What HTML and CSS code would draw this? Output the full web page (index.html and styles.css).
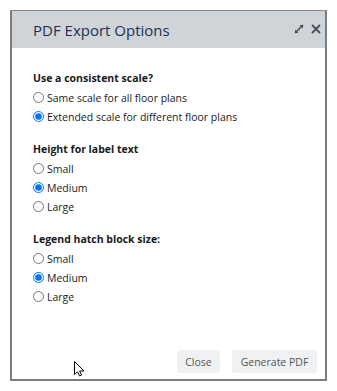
FILE: index.html
```html
<!DOCTYPE html>
<html lang="en">
<head>
<meta charset="UTF-8">
<meta name="viewport" content="width=device-width, initial-scale=1.0">
<title>PDF Export Options</title>
<link rel="stylesheet" href="styles.css">
</head>
<body>
    <div class="dialog">
        <div class="dialog-header">
            <h1>PDF Export Options</h1>
            <div class="header-icons">
                <svg class="icon-expand" width="10" height="10" viewBox="0 0 10 10">
                    <path d="M1 9 L9 1" stroke="#4a4f55" stroke-width="1.6"/>
                    <path d="M5.5 1 L9 1 L9 4.5 Z" fill="#4a4f55"/>
                    <path d="M1 5.5 L1 9 L4.5 9 Z" fill="#4a4f55"/>
                </svg>
                <svg class="icon-close" width="10" height="10" viewBox="0 0 10 10">
                    <path d="M1 1 L9 9 M9 1 L1 9" stroke="#4a4f55" stroke-width="1.8"/>
                </svg>
            </div>
        </div>
        <div class="dialog-body">
            <div class="option-group">
                <h2>Use a consistent scale?</h2>
                <label><input type="radio" name="scale"> Same scale for all floor plans</label>
                <label><input type="radio" name="scale" checked> Extended scale for different floor plans</label>
            </div>
            <div class="option-group">
                <h2>Height for label text</h2>
                <label><input type="radio" name="label"> Small</label>
                <label><input type="radio" name="label" checked> Medium</label>
                <label><input type="radio" name="label"> Large</label>
            </div>
            <div class="option-group">
                <h2>Legend hatch block size:</h2>
                <label><input type="radio" name="hatch"> Small</label>
                <label><input type="radio" name="hatch" checked> Medium</label>
                <label><input type="radio" name="hatch"> Large</label>
            </div>
        </div>
        <div class="dialog-footer">
            <button class="btn-close">Close</button>
            <button class="btn-generate">Generate PDF</button>
        </div>
    </div>
    <svg class="cursor" width="13" height="16" viewBox="0 0 13 16">
        <path d="M0.5 0.5 L0.5 13.5 L3.5 10.8 L5.6 15 L7.6 14.1 L5.6 10 L10 10 Z" fill="#fff" stroke="#000" stroke-width="1"/>
    </svg>
</body>
</html>
```

FILE: styles.css
```css
body {
    margin: 0;
    padding: 0;
    background: #fff;
    font-family: "Open Sans", Arial, sans-serif;
}
.dialog {
    margin: 10px 0 0 10px;
    width: 317px;
    height: 371px;
    box-sizing: border-box;
    border: 2px solid #7d7d7d;
    border-top: 1px solid #8a8a8a;
    display: flex;
    flex-direction: column;
    background: #fff;
}
.dialog-header {
    height: 37px;
    background: #cfd4d9;
    display: flex;
    align-items: center;
    justify-content: space-between;
    padding: 0 4px 0 21px;
}
h1 {
    margin: 0;
    font-size: 15px;
    font-weight: 500;
    color: #1f3050;
}
.header-icons {
    display: flex;
    align-items: center;
    gap: 7px;
    margin-top: -2px;
}
.dialog-body {
    flex: 1;
    padding: 21px 0 0 21px;
}
.option-group {
    margin-bottom: 14px;
}
h2 {
    margin: 0;
    font-size: 10.5px;
    font-weight: 700;
    line-height: 19px;
    color: #1a1a1a;
}
label {
    display: flex;
    align-items: center;
    height: 19px;
    font-size: 10.5px;
    color: #1a1a1a;
}
input[type="radio"] {
    width: 11px;
    height: 11px;
    margin: 0 3px 0 0;
}
.dialog-footer {
    display: flex;
    justify-content: flex-end;
    gap: 12px;
    padding: 0 8px 6px 0;
}
button {
    font-family: "Open Sans", Arial, sans-serif;
    font-size: 10.5px;
    color: #555;
    background: #eff1f3;
    border: none;
    border-radius: 3px;
    height: 23px;
    padding: 0;
}
.btn-close {
    width: 43px;
}
.btn-generate {
    width: 85px;
}
.cursor {
    position: absolute;
    left: 74px;
    top: 361px;
}
```
